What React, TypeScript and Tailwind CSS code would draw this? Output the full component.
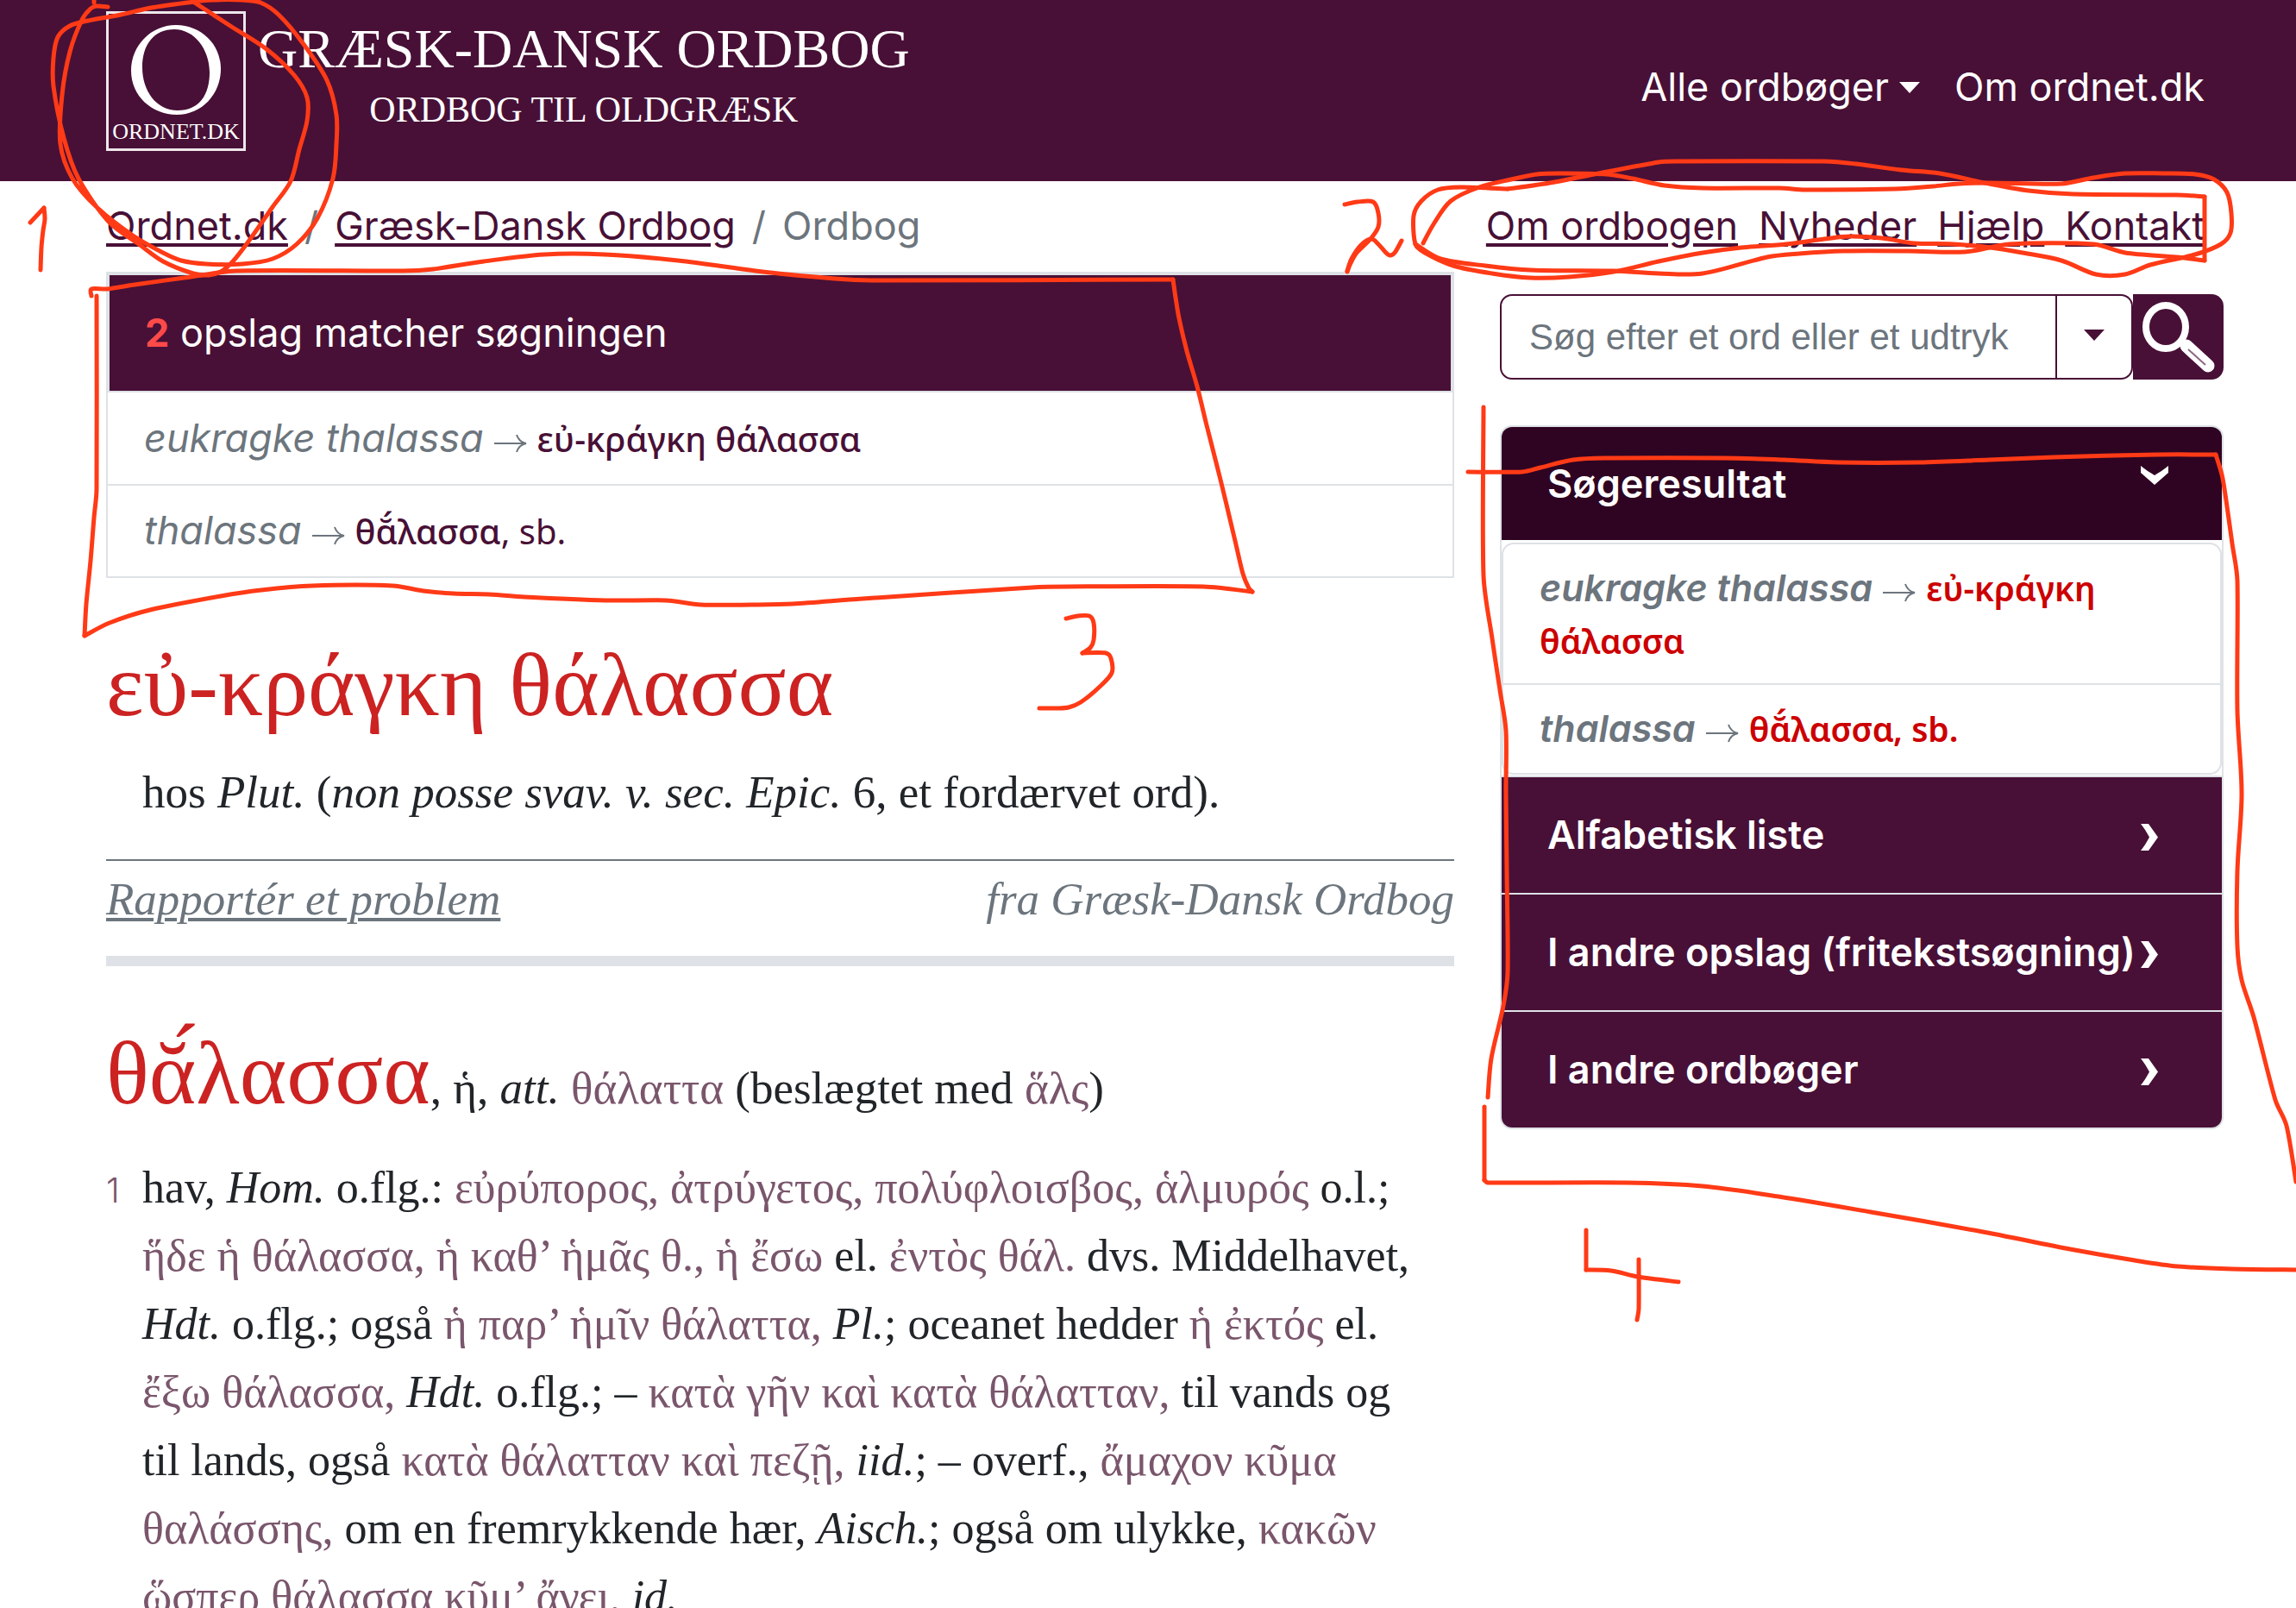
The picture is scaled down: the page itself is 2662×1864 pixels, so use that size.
import React from "react";

type Point = [number, number];

/* Freehand pen strokes, one list of points per stroke. */
const STROKES: string[] = [
  "125,8 112,7 105,10 95,23 81,60 72,110 70,167 84,207 112,240 154,273 189,293 210,302 239,306 281,306 316,300 344,283 368,253 386,207 390,167 390,133 379,93 351,50 323,17 302,3 281,0 246,0 217,3 175,9 140,17 102,24 81,30 67,43 62,67 62,100 74,160 91,207 126,257 161,283 189,303 224,317 242,319 256,315 270,303 288,280 316,240 337,210 347,173 356,140 356,113 341,87 309,57 267,30 224,2",
  "109,0 109,3",
  "35,258 51,241",
  "51,241 52,254 50,267 48,287 47,313",
  "1559,237 1574,234 1592,234 1598,247 1598,263 1589,277 1573,293 1566,305 1562,315",
  "1562,314 1567,300 1578,284 1590,277 1598,283 1606,292 1611,296 1617,293 1625,279",
  "1650,282 1662,260 1682,233 1715,217 1752,208 1782,202 1811,201 1863,202 1893,207 1930,215 1974,218 2063,218 2093,220 2197,219 2241,216 2271,213 2308,212 2390,213 2427,206 2464,201 2508,201 2545,202 2567,208 2582,223 2587,247 2586,270 2575,283 2545,295 2493,307 2464,318 2430,318 2390,302 2345,293 2308,287 2264,283 2219,282 2182,276 2145,274 2115,277 2071,283 2019,287 1974,293 1923,303 1871,315 1819,321 1774,322 1730,317 1685,308 1652,293 1641,283 1639,250 1648,233 1667,220 1693,217 1748,219",
  "1748,219 1797,212 1848,202 1923,188 1945,187 2115,187 2152,190 2204,197 2249,201 2301,212 2352,221 2404,225 2523,226 2556,228",
  "2556,228 2556,302",
  "2556,302 2523,298 2464,293 2427,283 2330,283 2278,292 2212,291 2138,291 2086,294 2049,298 1974,317 1923,317 1871,314 1774,313 1722,308 1670,300 1641,283",
  "106,343 106,335 124,335 156,330 221,321 274,314 467,314 502,312 561,303 631,295 701,295 786,302 884,315 968,323 1010,325 1360,324",
  "1360,324 1363,345 1367,369 1376,407 1388,448 1399,493 1416,560 1432,627 1441,665 1448,682 1452,686",
  "1452,686 1395,680 1239,680 1197,681 1000,694 919,700 872,701 813,701 772,696 702,696 608,692 567,689 526,688 491,685 455,679 362,679 303,684 256,691 174,707 127,722 98,737",
  "98,737 100,700 105,650 109,600 112,567 112,343",
  "1236,717 1250,714 1263,714 1268,722 1268,742 1264,751 1255,757",
  "1255,757 1282,757 1288,763 1289,780 1275,796 1253,814 1239,820 1225,821 1205,821",
  "1720,472 1720,667 1730,740 1739,800 1746,847 1746,920 1747,1010 1748,1127 1743,1166 1729,1227 1725,1272",
  "1702,547 1765,547 1786,542 1824,533 1862,531 1999,531 2068,533 2131,536 2225,536 2306,533 2381,530 2500,527 2569,527",
  "2569,527 2576,550 2580,573 2588,630 2594,673 2594,823 2599,920 2594,1010 2594,1097 2599,1136 2613,1179 2638,1275 2651,1305 2662,1370",
  "1721,1283 1721,1368",
  "1721,1368 1725,1371 1887,1371 1974,1375 2062,1387 2169,1405 2294,1427 2400,1448 2475,1461 2525,1468 2588,1471 2662,1472",
  "1839,1426 1839,1472",
  "1839,1472 1868,1473 1899,1480 1946,1486",
  "1900,1460 1900,1517 1898,1530",
];

function smoothPath(source: string): string {
  const pts = source.split(" ").map((p) => p.split(",").map(Number) as Point);
  let d = `M${pts[0][0]} ${pts[0][1]}`;
  for (let i = 0; i < pts.length - 1; i++) {
    const p0 = pts[Math.max(i - 1, 0)];
    const p1 = pts[i];
    const p2 = pts[i + 1];
    const p3 = pts[Math.min(i + 2, pts.length - 1)];
    const seg = Math.hypot(p2[0] - p1[0], p2[1] - p1[1]);
    const handle = (a: Point, b: Point): Point => {
      const len = Math.hypot(b[0] - a[0], b[1] - a[1]) || 1;
      const k = Math.min(1 / 6, (seg * 0.33) / len);
      return [(b[0] - a[0]) * k, (b[1] - a[1]) * k];
    };
    const h1 = handle(p0, p2);
    const h2 = handle(p1, p3);
    d += `C${p1[0] + h1[0]} ${p1[1] + h1[1]} ${p2[0] - h2[0]} ${p2[1] - h2[1]} ${p2[0]} ${p2[1]}`;
  }
  return d;
}

function PenMarks() {
  return (
    <svg
      aria-hidden="true"
      viewBox="0 0 2662 1864"
      className="pointer-events-none absolute top-0 left-0 w-full"
      fill="none"
      stroke="#ff3a16"
      strokeWidth="5"
      strokeLinecap="round"
      strokeLinejoin="round"
    >
      {STROKES.map((s) => (
        <path key={s} d={smoothPath(s)} />
      ))}
    </svg>
  );
}

function Caret() {
  return (
    <svg aria-hidden="true" viewBox="0 0 24 13" className="h-[13px] w-6" fill="currentColor">
      <path d="M0 0h24L12 13z" />
    </svg>
  );
}

function Greek({ children }: { children: React.ReactNode }) {
  return <span className="text-[#7a566c]">{children}</span>;
}

function Line({ children }: { children: React.ReactNode }) {
  return <span className="block whitespace-nowrap">{children}</span>;
}

function Arrow() {
  return (
    <svg
      aria-hidden="true"
      viewBox="0 0 38 28"
      className="mx-3 inline-block h-7 w-[38px] align-[-4px]"
      fill="none"
      stroke="#6c757d"
      strokeWidth="2"
    >
      <path d="M0 14h36M26 4c2 6 6 9 11 10c-5 1-9 4-11 10" />
    </svg>
  );
}

const ACCORDION = ["Alfabetisk liste", "I andre opslag (fritekstsøgning)", "I andre ordbøger"];

const CRUMB = "underline decoration-4 underline-offset-4";

export default function App() {
  return (
    <div className="relative h-screen overflow-hidden bg-white font-['Inter','Noto_Sans',sans-serif] text-[45px] leading-[60px] text-[#212529]">
      <header className="flex h-[210px] items-start justify-between bg-[#481036] pr-[106px] pl-[123px] text-white">
        <a href="#forside" className="flex pt-[13px]">
          <span className="flex h-[162px] w-[162px] flex-col items-center justify-end border-3 border-white/90 font-['Liberation_Serif',serif] text-[26px] leading-[30px]">
            <svg aria-hidden="true" viewBox="0 0 106 106" className="h-[106px] w-[106px]">
              <path
                fill="#fff"
                fillRule="evenodd"
                d="M53 1C82 1 105 23 105 52S83 105 54 105S1 83 1 54S24 1 53 1zM51 6C28 6 14 23 14 50S30 100 55 100S92 82 92 56S75 6 51 6z"
              />
            </svg>
            <span className="mt-1 mb-1">ORDNET.DK</span>
          </span>
          <span className="ml-[14px] flex flex-col items-center font-['Liberation_Serif',serif]">
            <span className="mt-1.5 text-[64px] leading-[76px]">GRÆSK-DANSK ORDBOG</span>
            <span className="mt-0.5 text-[42px] leading-[60px]">ORDBOG TIL OLDGRÆSK</span>
          </span>
        </a>
        <nav className="mt-[71px] flex gap-10">
          <button type="button" className="flex items-center gap-3">
            Alle ordbøger <Caret />
          </button>
          <a href="#om">Om ordnet.dk</a>
        </nav>
      </header>

      <div className="flex justify-between pt-[22px] pr-[106px] pl-[123px] text-[#481036]">
        <nav aria-label="Brødkrumme" className="flex gap-[19px]">
          <a href="#ordnet" className={CRUMB}>Ordnet.dk</a>
          <span className="text-[#6c757d]">/</span>
          <a href="#gdo" className={CRUMB}>Græsk-Dansk Ordbog</a>
          <span className="text-[#6c757d]">/</span>
          <span className="text-[#6c757d]">Ordbog</span>
        </nav>
        <nav aria-label="Menu" className="flex gap-6">
          <a href="#om-ordbogen" className={CRUMB}>Om ordbogen</a>
          <a href="#nyheder" className={CRUMB}>Nyheder</a>
          <a href="#hjaelp" className={CRUMB}>Hjælp</a>
          <a href="#kontakt" className={CRUMB}>Kontakt</a>
        </nav>
      </div>

      <div className="mt-[23px] grid grid-cols-[1563fr_839fr] gap-[53px] pr-[84px] pl-[123px]">
        <main className="min-w-0">
          <section className="border-2 border-[#dee2e6]">
            <h2 className="border-2 border-b-0 border-[#dee2e6] bg-[#481036] px-[41px] pt-[37px] pb-[37px] text-white">
              <b className="text-[#ff4a4a]">2</b> opslag matcher søgningen
            </h2>
            <ul>
              <li className="flex h-[108px] items-center border-t-2 border-[#dee2e6] px-[42px]">
                <a href="#e1" className="text-[#481036]">
                  <i className="text-[#6c757d]">eukragke thalassa</i>
                  <Arrow />
                  <span className="font-['Noto_Sans',sans-serif] text-[40px] font-medium">εὐ-κράγκη θάλασσα</span>
                </a>
              </li>
              <li className="flex h-[107px] items-center border-t-2 border-[#dee2e6] px-[42px]">
                <a href="#e2" className="text-[#481036]">
                  <i className="text-[#6c757d]">thalassa</i>
                  <Arrow />
                  <span className="font-['Noto_Sans',sans-serif] text-[40px]"><span className="font-medium">θᾰ́λασσα</span>, sb.</span>
                </a>
              </li>
            </ul>
          </section>

          <div className="font-['Liberation_Serif',serif] text-[53px]">
            <article>
              <h1 className="mt-16 text-[104px] leading-[120px] text-[#cc2222]">εὐ-κράγκη θάλασσα</h1>
              <p className="mt-[34px] pl-[42px] leading-[60px]">
                hos <i>Plut.</i> (<i>non posse svav. v. sec. Epic.</i> 6, et fordærvet ord).
              </p>
              <footer className="mt-12 flex justify-between border-t-2 border-[#6c757d] pt-[14px] pb-[36px] leading-[60px] text-[#6c757d] italic">
                <a href="#problem" className={CRUMB}>Rapportér et problem</a>
                <span>fra Græsk-Dansk Ordbog</span>
              </footer>
              <hr className="h-3 border-0 bg-[#dee2e6]" />
            </article>
            <article>
              <h2 className="mt-16 leading-[120px] whitespace-nowrap">
                <span className="text-[104px] text-[#cc2222]">θᾰ́λασσα</span>, ἡ, <i>att.</i> <Greek>θάλαττα</Greek> (beslægtet med <Greek>ἅλς</Greek>)
              </h2>
              <ol>
                <li className="mt-4 flex items-baseline text-[52px] leading-[79px]">
                  <span className="w-[42px] shrink-0 font-['Inter',sans-serif] text-[40px] font-light text-[#7a566c]">1</span>
                  <p>
                    <Line>hav, <i>Hom.</i> o.flg.: <Greek>εὐρύπορος, ἀτρύγετος, πολύφλοισβος, ἁλμυρός</Greek> o.l.;</Line>
                    <Line><Greek>ἥδε ἡ θάλασσα, ἡ καθ’ ἡμᾶς θ., ἡ ἔσω</Greek> el. <Greek>ἐντὸς θάλ.</Greek> dvs. Middelhavet,</Line>
                    <Line><i>Hdt.</i> o.flg.; også <Greek>ἡ παρ’ ἡμῖν θάλαττα,</Greek> <i>Pl.</i>; oceanet hedder <Greek>ἡ ἐκτός</Greek> el.</Line>
                    <Line><Greek>ἔξω θάλασσα,</Greek> <i>Hdt.</i> o.flg.; – <Greek>κατὰ γῆν καὶ κατὰ θάλατταν,</Greek> til vands og</Line>
                    <Line>til lands, også <Greek>κατὰ θάλατταν καὶ πεζῇ,</Greek> <i>iid.</i>; – overf., <Greek>ἄμαχον κῦμα</Greek></Line>
                    <Line><Greek>θαλάσσης,</Greek> om en fremrykkende hær, <i>Aisch.</i>; også om ulykke, <Greek>κακῶν</Greek></Line>
                    <Line><Greek>ὥσπερ θάλασσα κῦμ’ ἄγει,</Greek> <i>id.</i></Line>
                  </p>
                </li>
              </ol>
            </article>
          </div>
        </main>

        <aside className="min-w-0 pt-[26px]">
          <form className="flex h-[99px]" role="search">
            <input
              type="search"
              aria-label="Søg"
              placeholder="Søg efter et ord eller et udtryk"
              className="min-w-0 flex-1 rounded-l-[14px] border-2 border-[#481036] pr-4 pl-8 font-['Liberation_Sans',sans-serif] text-[42px] placeholder:text-[#6c757d]"
            />
            <button
              type="button"
              aria-label="Vælg søgning"
              className="flex w-[88px] items-center justify-center rounded-r-[14px] border-2 border-l-0 border-[#481036] pb-1 text-[#481036]"
            >
              <Caret />
            </button>
            <button type="submit" aria-label="Søg" className="w-[105px] rounded-r-[14px] bg-[#481036] px-[9px]">
              <svg aria-hidden="true" viewBox="0 0 86 86" className="h-[86px] w-[86px]" fill="none" stroke="#fff">
                <ellipse cx="29" cy="31" rx="23" ry="25" strokeWidth="8" />
                <path d="M53 53l25 23" strokeWidth="15" strokeLinecap="round" strokeLinejoin="round" />
                <path d="M55 57l20 18" stroke="#8d6a80" strokeWidth="2" />
              </svg>
            </button>
          </form>

          <section className="mt-[53px] overflow-hidden rounded-[14px] border-2 border-[#dee2e6] font-semibold">
            <button type="button" className="flex w-full items-center justify-between bg-[#2f0422] pt-9 pr-[62px] pb-[35px] pl-[53px] text-white">
              Søgeresultat
              <svg aria-hidden="true" viewBox="0 0 32 22" className="mb-5 h-[22px] w-8" fill="currentColor">
                <path d="M0 0c5 4 11 8 16 11C21 8 27 4 32 0v8L16 22L0 8z" />
              </svg>
            </button>
            <ul className="mt-[3px] mb-px rounded-[14px] border-2 border-[#dee2e6] text-[43px]">
              <li className="px-[42px] pt-5 pb-[19px]">
                <a href="#e1" className="block text-[#cc0000]">
                  <i className="text-[#6c757d]">eukragke thalassa</i>
                  <Arrow />
                  <span className="font-['Noto_Sans',sans-serif] text-[39px]">εὐ-κράγκη</span>{" "}
                  <span className="font-['Noto_Sans',sans-serif] text-[39px]">θάλασσα</span>
                </a>
              </li>
              <li className="border-t-2 border-[#dee2e6] px-[42px] pt-5 pb-[21px]">
                <a href="#e2" className="block text-[#cc0000]">
                  <i className="text-[#6c757d]">thalassa</i>
                  <Arrow />
                  <span className="font-['Noto_Sans',sans-serif] text-[39px]">θᾰ́λασσα, sb.</span>
                </a>
              </li>
            </ul>
            {ACCORDION.map((label) => (
              <button
                key={label}
                type="button"
                className="flex h-[136px] w-full items-center justify-between border-t-2 border-[#dee2e6] bg-[#481036] pr-[74px] pl-[53px] whitespace-nowrap text-white"
              >
                {label}
                <svg aria-hidden="true" viewBox="0 0 20 31" className="mt-1 h-[31px] w-5 shrink-0" fill="currentColor">
                  <path d="M0 0h9l11 15.500L9 31H0c4-5 7-10 10-15.500C7 10 4 5 0 0z" />
                </svg>
              </button>
            ))}
          </section>
        </aside>
      </div>
      <PenMarks />
    </div>
  );
}
